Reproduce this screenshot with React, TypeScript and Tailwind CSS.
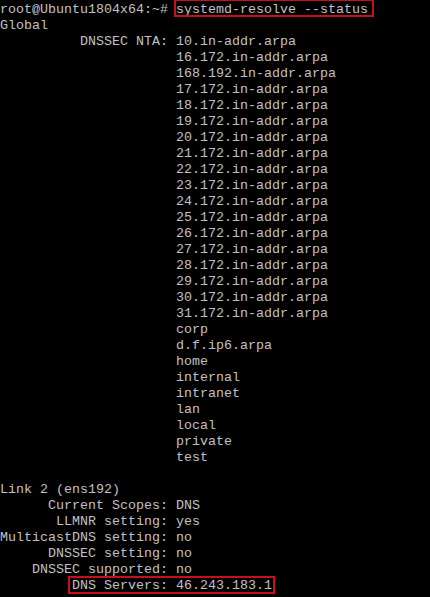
import type { ReactNode } from "react"

const ntaList = [
  "10.in-addr.arpa",
  "16.172.in-addr.arpa",
  "168.192.in-addr.arpa",
  ...Array.from({ length: 15 }, (_, i) => `${17 + i}.172.in-addr.arpa`),
  "corp",
  "d.f.ip6.arpa",
  "home",
  "internal",
  "intranet",
  "lan",
  "local",
  "private",
  "test",
]

function Boxed({ children, box }: { children: ReactNode; box: string }) {
  return (
    <span className="relative">
      {children}
      <span className={"absolute border-2 border-[#c8101a] " + box} />
    </span>
  )
}

function Line({ children }: { children?: ReactNode }) {
  return <div className="h-[16px] whitespace-pre">{children ?? " "}</div>
}

export default function App() {
  const pad = " ".repeat(22)

  return (
    <div className="w-[430px] h-[597px] overflow-hidden bg-black text-[#c0c0c0] font-['Liberation_Mono','Courier_New',monospace] text-[13.33px] leading-[16px] pt-[2px]">
      <Line>
        root@Ubuntu1804x64:~#{" "}
        <Boxed box="-left-[2px] -right-[6px] -top-[3px] -bottom-[0px]">systemd-resolve --status</Boxed>
      </Line>
      <Line>Global</Line>
      {ntaList.map((item, i) => (
        <Line key={item}>{i === 0 ? "          DNSSEC NTA: " + item : pad + item}</Line>
      ))}
      <Line />
      <Line>Link 2 (ens192)</Line>
      <Line>      Current Scopes: DNS</Line>
      <Line>       LLMNR setting: yes</Line>
      <Line>MulticastDNS setting: no</Line>
      <Line>      DNSSEC setting: no</Line>
      <Line>    DNSSEC supported: no</Line>
      <Line>
        {"         "}
        <Boxed box="-left-[4px] -right-[3px] -top-[2px] -bottom-[1px]">DNS Servers: 46.243.183.1</Boxed>
      </Line>
    </div>
  )
}
